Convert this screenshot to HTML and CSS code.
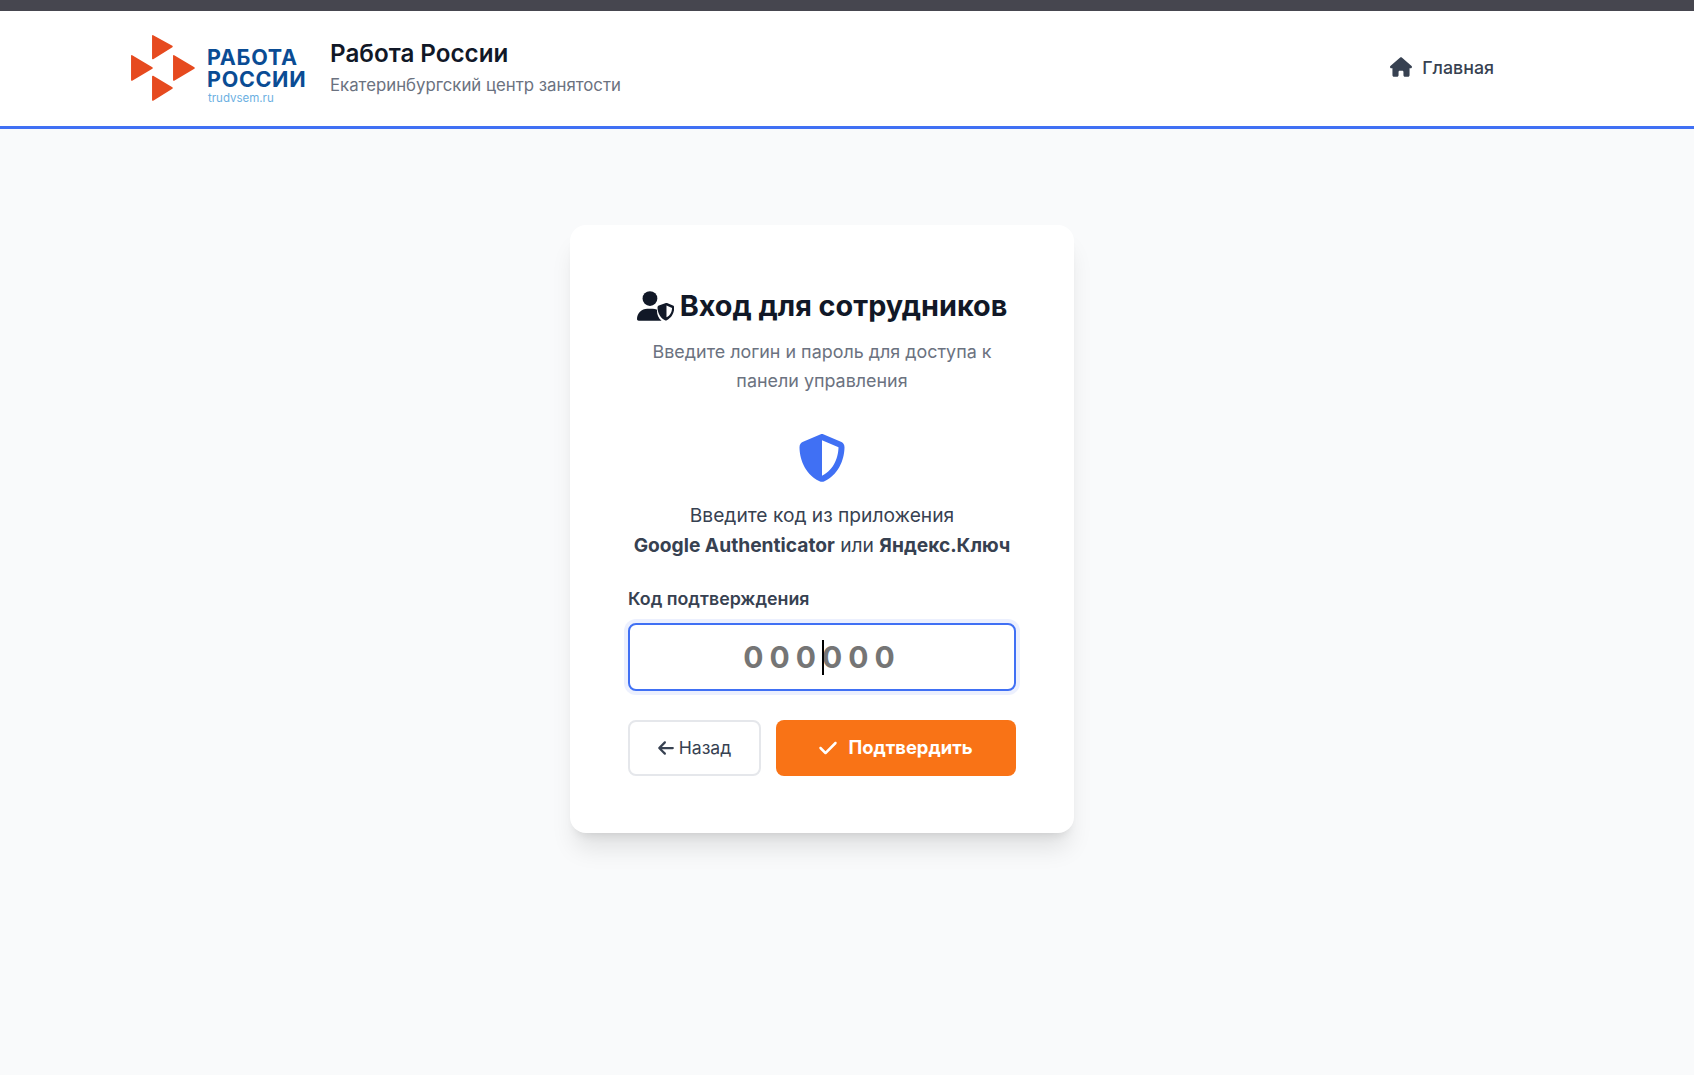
FILE: index.html
```html
<!DOCTYPE html>
<html lang="ru">
<head>
<meta charset="utf-8">
<title>Вход для сотрудников</title>
<link rel="stylesheet" href="styles.css">
</head>
<body>
<div class="topbar"></div>
<header class="header">
  <div class="brand">
    <div class="logo">
      <svg class="logo-mark" viewBox="0 0 66 68" aria-hidden="true">
        <g fill="#e64a1f" stroke="#e64a1f" stroke-width="1.5" stroke-linejoin="round">
          <path d="M22.8 1.8 42 12.5 22.8 24.5Z"/>
          <path d="M1.8 21.8 22 34 1.8 46Z"/>
          <path d="M43.8 21.8 64 34 43.8 46Z"/>
          <path d="M22.8 42.5 42 54 22.8 66Z"/>
        </g>
      </svg>
      <div class="logo-text">
        <span class="logo-line">РАБОТА</span>
        <span class="logo-line">РОССИИ</span>
        <span class="logo-url">trudvsem.ru</span>
      </div>
    </div>
    <div class="brand-text">
      <div class="brand-title">Работа России</div>
      <div class="brand-sub">Екатеринбургский центр занятости</div>
    </div>
  </div>
  <a class="nav-link" href="#">
    <svg class="nav-icon" viewBox="0 0 576 512" aria-hidden="true"><path fill="currentColor" d="M575.8 255.5c0 18-15 32.1-32 32.1h-32l.7 160.2c0 2.7-.2 5.4-.5 8.1V472c0 22.1-17.9 40-40 40H456c-1.1 0-2.2 0-3.3-.1c-1.4 .1-2.8 .1-4.2 .1H416 392c-22.1 0-40-17.9-40-40V448 384c0-17.7-14.3-32-32-32H256c-17.7 0-32 14.3-32 32v64 24c0 22.1-17.9 40-40 40H160 128.1c-1.5 0-3-.1-4.5-.2c-1.2 .1-2.4 .2-3.6 .2H104c-22.1 0-40-17.9-40-40V360c0-.9 0-1.9 .1-2.8V287.6H32c-18 0-32-14-32-32.1c0-9 3-17 10-24L266.4 8c7-7 15-8 22-8s15 2 21 7L564.8 231.5c8 7 12 15 11 24z"/></svg>
    <span>Главная</span>
  </a>
</header>
<main class="main">
  <section class="card">
    <h1 class="card-title">
      <svg class="title-icon" viewBox="0 0 640 512" aria-hidden="true">
        <g fill="currentColor">
          <circle cx="224" cy="128" r="128"/>
          <path d="M178.300 304h91.400c28 0 54.500 6.400 78.100 17.800-1.200 7-1.800 14.200-1.800 21.400 .7 62.400 24 127.500 79 168.800H29.700C13.300 512 0 498.700 0 482.300 0 383.800 79.800 304 178.300 304z"/>
          <path fill-rule="evenodd" d="M512 208c3.400 0 6.800 .7 9.900 2.100l102 43.300c13.300 5.600 23.200 18.800 23.100 34.600-.3 60-25 169.800-129.200 219.700-10.100 4.800-21.800 4.800-31.900 0C381.700 457.800 357 348 356.700 288c-.1-15.800 9.800-29 23.100-34.600l122.200-43.300c3.100-1.400 6.600-2.100 10-2.100zm0 46v204c74-36 96-114 97-162z" transform="translate(-2 -6)"/>
        </g>
      </svg>
      <span>Вход для сотрудников</span>
    </h1>
    <p class="card-desc">Введите логин и пароль для доступа к панели управления</p>
    <svg class="shield" viewBox="16 0 480 512" aria-hidden="true"><path fill="currentColor" d="M256 0c4.600 0 9.200 1 13.400 2.900L457.700 82.800c22 9.300 38.400 31 38.300 57.200c-.5 99.200-41.300 280.700-213.600 363.200c-16.700 8-36.100 8-52.800 0C57.300 420.700 16.500 239.200 16 140c-.1-26.200 16.300-47.900 38.300-57.200L242.700 2.900C246.800 1 251.400 0 256 0zm0 66.800V444.800C394 378 431.100 230.100 432 141.400L256 66.800l0 0z"/></svg>
    <p class="hint">Введите код из приложения<br><strong>Google Authenticator</strong> или <strong>Яндекс.Ключ</strong></p>
    <form class="form">
      <label class="label" for="code">Код подтверждения</label>
      <div class="input-wrap">
        <input class="code-input" id="code" type="text" placeholder="000000" maxlength="6">
        <span class="caret"></span>
      </div>
      <div class="actions">
        <button class="btn btn-back" type="button">
          <svg class="btn-icon-back" viewBox="0 0 448 512" aria-hidden="true"><path fill="currentColor" d="M9.400 233.400c-12.500 12.500-12.500 32.800 0 45.300l160 160c12.500 12.500 32.800 12.500 45.300 0s12.500-32.800 0-45.300L109.200 288H416c17.700 0 32-14.300 32-32s-14.300-32-32-32H109.300L214.600 118.600c12.500-12.500 12.500-32.800 0-45.300s-32.800-12.500-45.300 0l-160 160z"/></svg>
          <span class="btn-label">Назад</span>
        </button>
        <button class="btn btn-confirm" type="button">
          <svg class="btn-icon-check" viewBox="0 0 448 512" aria-hidden="true"><path fill="currentColor" d="M438.600 105.400c12.500 12.500 12.500 32.800 0 45.300l-256 256c-12.500 12.500-32.800 12.500-45.300 0l-128-128c-12.500-12.500-12.500-32.800 0-45.300s32.800-12.500 45.300 0L160 338.700 393.400 105.400c12.500-12.500 32.800-12.500 45.300 0z"/></svg>
          <span class="btn-label">Подтвердить</span>
        </button>
      </div>
    </form>
  </section>
</main>
</body>
</html>
```

FILE: styles.css
```css
* { box-sizing: border-box; }
html, body { margin: 0; height: 100%; }
body {
  background: #f9fafb;
  font-family: Inter, "Liberation Sans", sans-serif;
  color: #111827;
  display: flex;
  flex-direction: column;
  min-height: 1075px;
}
.topbar { height: 11px; background: #46464f; flex: none; }
.header {
  flex: none;
  height: 118px;
  background: #fff;
  border-bottom: 3px solid #4070f4;
  display: flex;
  align-items: center;
  justify-content: space-between;
  padding: 0 200px 1px 130px;
}
.brand { display: flex; align-items: center; gap: 23px; }
.logo { display: flex; align-items: center; gap: 11px; width: 177px; }
.logo-mark { width: 66px; height: 68px; flex: none; }
.logo-text { display: flex; flex-direction: column; color: #0a4c94; padding-top: 14px; }
.logo-line { font-weight: 700; font-size: 21.500px; line-height: 22px; letter-spacing: .7px; white-space: nowrap; }
.logo-url { font-size: 11.500px; line-height: 14px; color: #6cb0e2; margin-left: 1px; margin-top: 1px; }
.brand-text { display: flex; flex-direction: column; gap: 3px; padding-bottom: 2px; }
.brand-title { font-size: 24.200px; font-weight: 600; line-height: 32px; color: #111827; }
.brand-sub { font-size: 16.800px; line-height: 24px; color: #6b7280; }
.nav-link { display: flex; align-items: center; gap: 10px; color: #374151; font-size: 17.800px; font-weight: 500; text-decoration: none; padding-bottom: 2px; }
.nav-icon { width: 22px; height: 20px; }
.main { flex: 1; display: flex; justify-content: center; align-items: flex-start; padding: 96px 50px 0 0; }
.card {
  width: 504px;
  height: 608px;
  background: #fff;
  border-radius: 16px;
  padding: 58px;
  box-shadow: 0 20px 25px -5px rgba(0,0,0,.1), 0 8px 10px -6px rgba(0,0,0,.1);
  display: flex;
  flex-direction: column;
  align-items: center;
  text-align: center;
}
.card-title { margin: 0; display: flex; align-items: center; gap: 6px; font-size: 28.800px; font-weight: 700; line-height: 46px; color: #111827; }
.title-icon { width: 37px; height: 30px; flex: none; }
.card-desc { margin: 8px 0 0; font-size: 17.920px; line-height: 29px; color: #6b7280; }
.shield { width: 46px; height: 48px; margin-top: 39px; color: #4070f4; flex: none; }
.hint { margin: 18px 0 0; font-size: 19.200px; line-height: 30px; color: #374151; }
.hint strong { font-weight: 700; }
.form { width: 100%; margin-top: 26px; display: flex; flex-direction: column; }
.label { font-size: 17.800px; font-weight: 600; line-height: 26px; color: #374151; text-align: left; }
.input-wrap { position: relative; margin-top: 11px; }
.code-input {
  display: block;
  width: 100%;
  height: 68px;
  border: 2px solid #4070f4;
  border-radius: 8px;
  box-shadow: 0 0 0 4px rgba(64,112,244,.1);
  background: #fff;
  outline: none;
  text-align: center;
  font-family: Inter, sans-serif;
  font-size: 30px;
  font-weight: 700;
  letter-spacing: 6px;
  caret-color: transparent;
}
.code-input::placeholder { color: #757575; opacity: 1; }
.caret { position: absolute; left: 194px; top: 17px; width: 2px; height: 35px; background: #000; }
.actions { display: flex; gap: 15px; margin-top: 29px; }
.btn { height: 56px; border-radius: 8px; display: flex; align-items: center; justify-content: center; font-family: Inter, sans-serif; font-size: 17.600px; cursor: pointer; }
.btn-back { width: 133px; flex: none; background: #fff; border: 2px solid #e5e7eb; color: #374151; gap: 5px; font-weight: 400; }
.btn-confirm { flex: 1; background: #f97316; border: none; color: #fff; gap: 11px; font-weight: 700; font-size: 18.400px; }
.btn-label { margin-bottom: 2px; }
.btn-icon-back { width: 16px; height: 18px; }
.btn-icon-check { width: 18px; height: 20px; }
```
